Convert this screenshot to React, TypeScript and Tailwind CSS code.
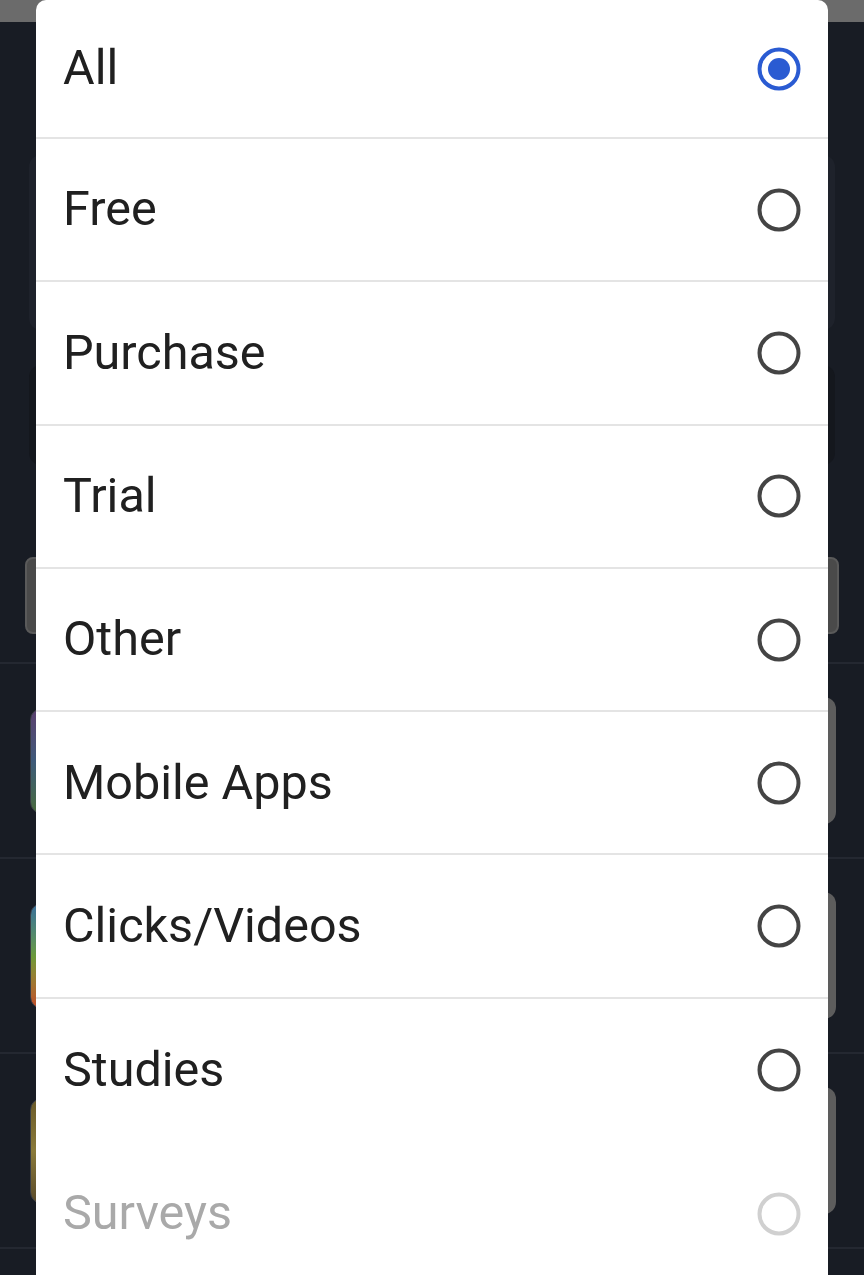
import React from "react";

const items = [
  { label: "All", selected: true },
  { label: "Free" },
  { label: "Purchase" },
  { label: "Trial" },
  { label: "Other" },
  { label: "Mobile Apps" },
  { label: "Clicks/Videos" },
  { label: "Studies", noDivider: true },
  { label: "Surveys", disabled: true },
];

function Radio({ selected, disabled }: { selected?: boolean; disabled?: boolean }) {
  const color = selected ? "#2a5bd2" : disabled ? "#d0d0d0" : "#444444";
  return (
    <svg width="46" height="46" viewBox="0 0 46 46">
      <circle cx="23" cy="23" r="19.5" fill="none" stroke={color} strokeWidth="4" />
      {selected && <circle cx="23" cy="23" r="11" fill={color} />}
    </svg>
  );
}

function BgRow({ thumb }: { thumb: string }) {
  return (
    <div className="h-[195px] border-b-2 border-[#242831] flex items-center justify-between pl-[30px] pr-[28px]">
      <div className={`w-[120px] h-[106px] rounded-xl border border-[#3a3e46] ${thumb}`} />
      <div className="w-[120px] h-[127px] rounded-xl bg-[#5d5d5d]" />
    </div>
  );
}

export default function App() {
  return (
    <div className="relative w-[864px] h-[1275px] overflow-hidden bg-[#181c24]" style={{ fontFamily: "Roboto, 'Noto Sans', sans-serif" }}>
      {/* background page */}
      <div className="flex flex-col">
        <div className="h-[22px] bg-[#6b6b6b]" />
        <div className="h-[640px] flex flex-col pt-[133px] px-[25px]">
          <div className="mx-[4px] h-[175px] rounded-xl bg-[#1e222b]" />
          <div className="mx-[4px] mt-[35px] h-[100px] rounded-xl bg-[#14171d]" />
          <div className="mt-[92px] h-[77px] rounded-lg border-2 border-[#5a5a5a] bg-[#4a4a4a]" />
        </div>
        <div className="border-t-2 border-[#242831]" />
        <BgRow thumb="bg-gradient-to-b from-[#5a3f6e] via-[#3e5a7a] to-[#4a6a3a]" />
        <BgRow thumb="bg-gradient-to-b from-[#3a6e9a] via-[#6a9a3a] to-[#c04a2a]" />
        <BgRow thumb="bg-gradient-to-b from-[#6a5a2a] via-[#8a7a3a] to-[#5a4a2a]" />
      </div>

      {/* modal sheet */}
      <div className="absolute left-[36px] top-0 w-[792px] h-[1320px] bg-white rounded-t-[10px] flex flex-col">
        {items.map((it, i) => (
          <div
            key={it.label}
            className={`${i === 0 ? "h-[139px]" : "h-[143.3px]"} shrink-0 flex items-center justify-between pl-[27px] pr-[26px] ${
              it.noDivider || it.disabled ? "" : "border-b-2 border-[#e4e4e4]"
            }`}
          >
            <span className={`text-[48.5px] leading-none ${it.disabled ? "text-[#a9a9a9]" : "text-[#202020]"}`}>{it.label}</span>
            <Radio selected={it.selected} disabled={it.disabled} />
          </div>
        ))}
      </div>
    </div>
  );
}
